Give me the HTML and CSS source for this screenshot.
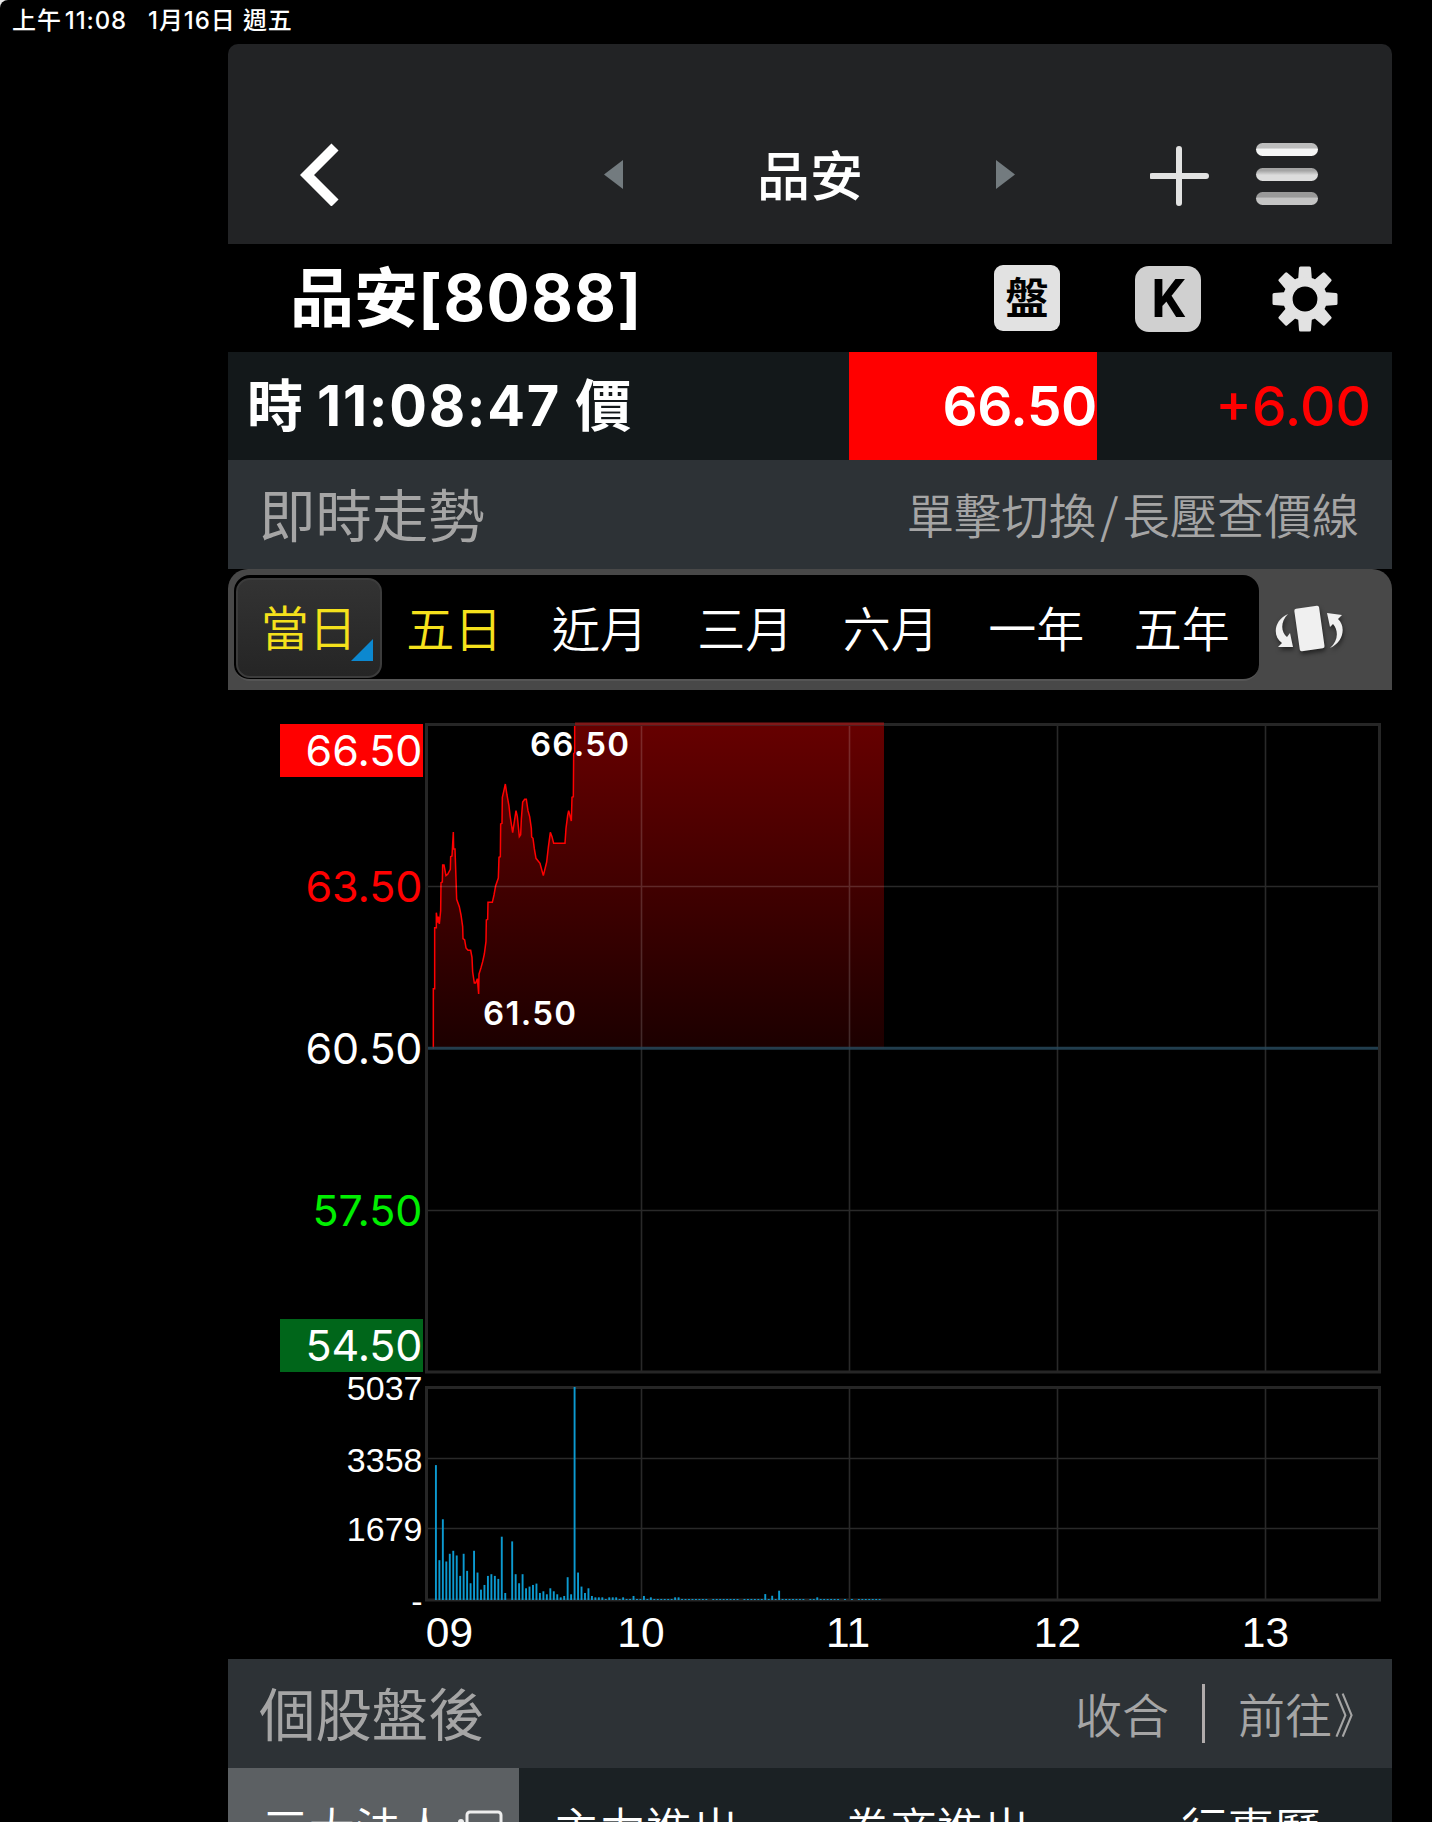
FILE: index.html
```html
<!DOCTYPE html>
<html lang="zh-Hant">
<head>
    <meta charset="UTF-8">
    <meta name="viewport" content="width=device-width, initial-scale=1.0">
    <title>品安[8088]</title>
    <link rel="stylesheet" href="styles.css">
</head>
<body>
    <div class="screen">
        <div class="status-bar">
            <span class="status-time">上午<b>11:08</b></span>
            <span class="status-date">1月16日 週五</span>
        </div>

        <div class="app">
            <header class="nav">
                <svg class="nav-back" viewBox="0 0 40 64"><path d="M35 5 7 33l28 28" fill="none" stroke="#fff" stroke-width="10"/></svg>
                <div class="nav-title">
                    <svg class="nav-arrow" viewBox="0 0 20 30"><path d="M19 1v29L0 15.500z" fill="#737b7f"/></svg>
                    <h1>品安</h1>
                    <svg class="nav-arrow" viewBox="0 0 20 30"><path d="M0 1v29l19-14.500z" fill="#737b7f"/></svg>
                </div>
                <svg class="nav-add" viewBox="0 0 60 60"><path d="M29 3v54M2 30h54" stroke="#e2e2e2" stroke-width="6" stroke-linecap="round"/></svg>
                <div class="nav-menu">
                    <i class="bar bar-1"></i>
                    <i class="bar bar-2"></i>
                    <i class="bar bar-3"></i>
                </div>
            </header>

            <div class="stock">
                <h2>品安<span>[8088]</span></h2>
                <span class="key">盤</span>
                <span class="key key-k">K</span>
                <svg class="gear" viewBox="-33 -33 66 66">
                    <g fill="#e2e2e2">
                        <path id="tooth" d="M-7-18-6-31q0-1.500 1.500-1.500h9q1.500 0 1.500 1.500l1 13z"/>
                        <use href="#tooth" transform="rotate(45)"/>
                        <use href="#tooth" transform="rotate(90)"/>
                        <use href="#tooth" transform="rotate(135)"/>
                        <use href="#tooth" transform="rotate(180)"/>
                        <use href="#tooth" transform="rotate(225)"/>
                        <use href="#tooth" transform="rotate(270)"/>
                        <use href="#tooth" transform="rotate(315)"/>
                    </g>
                    <circle r="17" fill="none" stroke="#e2e2e2" stroke-width="10"/>
                    <circle r="12.400" fill="#000"/>
                </svg>
            </div>

            <div class="quote">
                <div class="quote-time">時 <span>11:08:47</span> 價</div>
                <div class="quote-price">66.50</div>
                <div class="quote-change">+6.00</div>
            </div>

            <div class="section">
                <h3>即時走勢</h3>
                <span class="hint">單擊切換<em>/</em>長壓查價線</span>
            </div>

            <div class="range">
                <div class="range-tabs">
                    <span class="tab tab-active">當日</span>
                    <span class="tab tab-yellow">五日</span>
                    <span class="tab">近月</span>
                    <span class="tab">三月</span>
                    <span class="tab">六月</span>
                    <span class="tab">一年</span>
                    <span class="tab">五年</span>
                </div>
                <svg class="rotate" viewBox="0 0 70 60">
                    <g fill="#f0f0f0">
                        <rect x="22" y="8" width="25" height="43" rx="2" transform="rotate(-8 34.500 30)"/>
                        <path d="M13 15C-1 21-3 37 7 44l-4 4h15l-3-14-3 4C6 33 5 23 13 15z"/>
                        <path d="M55 49C69 43 71 27 63 20l4-4-15-2 3 14 3-3C64 32 63 42 55 49z"/>
                    </g>
                </svg>
            </div>

            <svg class="chart" viewBox="0 0 1164 969" width="1164" height="969">
                <defs>
                    <linearGradient id="area" x1="0" y1="0" x2="0" y2="1">
                        <stop offset="0" stop-color="#660000"/>
                        <stop offset="1" stop-color="#1c0000"/>
                    </linearGradient>
                </defs>

                <!-- price axis -->
                <rect x="52" y="34" width="143" height="53" fill="#f00"/>
                <rect x="52" y="629" width="143" height="53" fill="#00661a"/>
                <g class="price-axis">
                    <text x="194.500" y="76" textLength="117">66.50</text>
                    <text x="194.500" y="212" textLength="117" class="up">63.50</text>
                    <text x="194.500" y="374" textLength="117">60.50</text>
                    <text x="194.500" y="536" textLength="110" class="down">57.50</text>
                    <text x="194.500" y="671" textLength="117">54.50</text>
                </g>

                <!-- price area: coordinates are thirds of a pixel -->
                <g transform="translate(42 10) scale(.33333)">
                    <path id="fill" fill="url(#area)"/>
                    <path id="line" fill="none" stroke="#f00" stroke-width="4.500"/>
                </g>

                <g class="grid">
                    <path d="M413.500 35v647M621.500 35v647M829.500 35v647M1037.500 35v647M199 196.500h953M199 520.500h953"/>
                    <path d="M413.500 699v210M621.500 699v210M829.500 699v210M1037.500 699v210M199 768.500h953M199 838.500h953"/>
                </g>
                <path d="M199 358.300h953" stroke="#27485a" stroke-opacity=".85" stroke-width="3"/>
                <g class="frame">
                    <rect x="198.500" y="34.500" width="953" height="647.500"/>
                    <rect x="198.500" y="697.500" width="953" height="212.500"/>
                </g>
                <path d="M347 34h309" stroke="#801818" stroke-width="3"/>

                <g class="peak">
                    <text x="302" y="66" textLength="99">66.50</text>
                    <text x="255" y="335" textLength="93">61.50</text>
                </g>

                <!-- volume -->
                <g id="volume" fill="#0c9ad0"></g>
                <g class="volume-axis">
                    <text x="194.500" y="710">5037</text>
                    <text x="194.500" y="782">3358</text>
                    <text x="194.500" y="851">1679</text>
                    <text x="194.500" y="923">-</text>
                </g>
                <g class="hours">
                    <text x="221.500" y="957">09</text>
                    <text x="413" y="957">10</text>
                    <text x="620" y="957">11</text>
                    <text x="829.500" y="957">12</text>
                    <text x="1037.500" y="957">13</text>
                </g>
            </svg>

            <div class="section">
                <h3>個股盤後</h3>
                <div class="actions">
                    <span>收合</span>
                    <i class="divider"></i>
                    <span class="goto">前往<em>》</em></span>
                </div>
            </div>

            <div class="report-tabs">
                <span class="report report-active">三大法人
                    <svg viewBox="0 0 46 46"><rect x="9" y="3" width="34" height="38" rx="3" fill="none" stroke="#eee" stroke-width="3"/><circle cx="3" cy="13" r="3" fill="#eee"/></svg>
                </span>
                <span class="report">主力進出</span>
                <span class="report">券商進出</span>
                <span class="report report-last">行事曆</span>
            </div>
        </div>
    </div>

    <script>
        const prices = '490,1046 490,866 494,866 494,683 499,683 499,638 503,668 505,650 508,672 512,632 513,548 517,546 518,495 522,495 528,527 533,523 541,508 542,470 546,468 550,396 551,447 555,447 558,536 560,598 568,620 573,645 578,680 579,716 584,720 588,744 594,751 602,751 606,772 608,816 613,849 617,849 622,836 626,882 627,822 633,803 638,785 643,762 648,724 649,660 653,658 654,607 667,607 672,585 677,557 685,534 687,472 691,470 692,372 696,370 697,292 701,275 706,252 711,285 717,318 720,346 728,398 733,365 738,332 742,350 748,410 752,404 754,358 758,306 764,298 769,298 774,332 779,350 784,385 785,411 789,415 793,446 798,475 810,490 820,527 830,486 835,442 841,397 846,410 851,430 885,430 888,385 893,346 896,332 904,363 906,292 910,290 911,160 914,158 914,73';
        document.getElementById('line').setAttribute('d', 'M' + prices);
        document.getElementById('fill').setAttribute('d', 'M' + prices + ' 1842,73 1842,1046z');

        // volume per minute from 09:01
        const volumes = [
            3190, 942, 1909, 911, 1093, 1164, 1053, 570, 1093, 689, 396, 1164, 649, 245, 356, 570, 610, 570, 499, 1497,
            166, 0, 1386, 610, 396, 610, 277, 317, 356, 388, 166, 206, 135, 277, 206, 135, 63, 95, 539, 135,
            5037, 649, 317, 166, 277, 95, 63, 63, 63, 24, 63, 63, 63, 24, 63, 24, 24, 95, 24, 24,
            95, 24, 63, 24, 24, 24, 24, 24, 24, 63, 63, 24, 24, 24, 24, 24, 24, 24, 24, 0,
            24, 24, 24, 24, 24, 24, 24, 24, 0, 24, 24, 24, 24, 24, 24, 140, 24, 100, 24, 220,
            24, 24, 24, 24, 24, 24, 24, 0, 24, 24, 63, 24, 24, 24, 24, 24, 24, 0, 24, 0,
            24, 0, 24, 24, 24, 24, 24, 24, 24
        ];
        const group = document.getElementById('volume');
        volumes.forEach((v, i) => {
            const h = v / 5037 * 213;
            const bar = document.createElementNS('http://www.w3.org/2000/svg', 'rect');
            bar.setAttribute('x', (203.5 + (i + 1) * 208 / 60).toFixed(2));
            bar.setAttribute('y', (910 - h).toFixed(2));
            bar.setAttribute('width', 1.9);
            bar.setAttribute('height', h.toFixed(2));
            group.appendChild(bar);
        });
    </script>
</body>
</html>
```
FILE: styles.css
```css
* {
    box-sizing: border-box;
}

body {
    margin: 0;
    background: #e8e8e8;
    color: #fff;
    font-family: Inter, "Noto Sans CJK TC", sans-serif;
}

h1, h2, h3 {
    margin: 0;
}

.screen {
    height: 1822px;
    background: #000;
    border-top-left-radius: 8px;
    overflow: hidden;
}

.status-bar {
    height: 44px;
    padding-left: 12px;
    display: flex;
    align-items: center;
    gap: 21px;
    font-size: 24px;
    font-weight: 500;
    line-height: 40px;
    padding-bottom: 3px;
    letter-spacing: 0.9px;
    white-space: nowrap;
}

.status-time b {
    font-weight: 500;
    margin-left: 3px;
}

.app {
    width: 1164px;
    margin-left: 228px;
}

.nav {
    height: 200px;
    padding: 60px 74px 0 72px;
    background: #222325;
    border-radius: 10px 10px 0 0;
    display: flex;
    align-items: center;
}

.nav-back {
    width: 40px;
    height: 64px;
}

.nav-title {
    width: 412px;
    margin-left: 264px;
    display: flex;
    align-items: center;
    justify-content: space-between;
}

.nav-title h1 {
    margin-top: 5px;
    font-size: 53px;
    font-weight: 500;
    line-height: 60px;
}

.nav-arrow {
    width: 20px;
    height: 30px;
}

.nav-add {
    width: 60px;
    height: 60px;
    margin-left: 134px;
    margin-top: 4px;
}

.nav-menu {
    width: 62px;
    height: 62px;
    margin-left: auto;
    display: flex;
    flex-direction: column;
    justify-content: space-between;
}

.bar {
    height: 13px;
    border-radius: 7px;
}

.bar-1 {
    background: linear-gradient(#bdbdbd 40%, #f5f5f5 45%);
}

.bar-2 {
    background: linear-gradient(#a4a4a4 20%, #dcdcdc 55%);
}

.bar-3 {
    background: linear-gradient(#999 38%, #c4c4c4 48%);
}

.stock {
    height: 108px;
    padding: 0 54px 0 62px;
    display: flex;
    align-items: center;
}

.stock h2 {
    flex: 1;
    font-size: 64px;
    font-weight: 600;
    line-height: 100px;
    white-space: nowrap;
}

.stock h2 span {
    font-weight: 650;
    letter-spacing: 1.4px;
}

.key {
    width: 66px;
    height: 66px;
    margin-right: 75px;
    background: #e2e2e2;
    border-radius: 9px;
    color: #000;
    font-size: 43px;
    font-weight: 600;
    line-height: 67px;
    text-align: center;
}

.key-k {
    margin-right: 71px;
    margin-top: 2px;
    background: #d0d0d0;
    border-radius: 14px;
    font-family: Roboto, sans-serif;
    font-size: 53px;
    font-weight: 700;
}

.gear {
    width: 66px;
    height: 66px;
    margin-top: 2px;
}

.quote {
    height: 108px;
    background: #13181a;
    display: flex;
    font-size: 56px;
    font-weight: 600;
    line-height: 109px;
    white-space: nowrap;
}

.quote-time {
    width: 621px;
    padding-left: 19px;
}

.quote-time span {
    font-weight: 650;
    letter-spacing: 1.7px;
}

.quote-price {
    width: 248px;
    background: #f00;
    font-size: 55px;
    letter-spacing: -0.4px;
    text-align: right;
}

.quote-change {
    flex: 1;
    padding-right: 21px;
    color: #f00;
    font-size: 55px;
    font-weight: 550;
    text-align: right;
}

.section {
    height: 109px;
    padding: 0 33px 0 31px;
    background: #2d3236;
    color: #a5a5a5;
    display: flex;
    align-items: center;
    justify-content: space-between;
    font-family: "Noto Sans CJK TC", sans-serif;
    font-weight: 350;
}

.section h3 {
    margin-top: -4px;
    font-size: 56.4px;
    font-weight: 400;
}

.hint {
    margin-top: -2px;
    font-size: 47.3px;
}

.hint em {
    font-style: normal;
    margin: 0 4px;
}

.actions {
    display: flex;
    align-items: center;
    font-size: 47px;
}

.actions span {
    margin-top: -2px;
}

.divider {
    width: 3px;
    height: 59px;
    margin: 0 33px;
    background: #b0abab;
}

.goto {
    width: 121px;
    white-space: nowrap;
}

.goto em {
    display: inline-block;
    margin-left: 2px;
    font-style: normal;
    transform: scaleX(0.85);
    transform-origin: left;
}

.range {
    height: 121px;
    padding: 6px 0 9px 6px;
    background: #484848;
    border-radius: 20px 20px 0 0;
    display: flex;
}

.range-tabs {
    width: 1025px;
    padding: 3px 0 0 2px;
    background: #000;
    border-bottom: 2px solid #555;
    border-radius: 16px;
    display: flex;
}

.tab {
    width: 145.5px;
    height: 100px;
    font-family: "Noto Sans CJK TC", sans-serif;
    font-size: 48px;
    font-weight: 350;
    line-height: 97px;
    text-align: center;
}

.tab-active {
    position: relative;
    background: linear-gradient(#333, #252525);
    border: 2px solid #3c3c3c;
    border-radius: 14px;
    color: #f5e11c;
    line-height: 91px;
}

.tab-active::after {
    content: "";
    position: absolute;
    right: 7px;
    bottom: 15px;
    border-left: 22px solid transparent;
    border-bottom: 22px solid #0c88d0;
}

.tab-yellow {
    color: #f5e11c;
}

.rotate {
    width: 70px;
    height: 60px;
    margin: 24px 0 0 16px;
    filter: drop-shadow(1px 3px 2px rgba(0, 0, 0, 0.5));
}

.chart {
    display: block;
}

.chart text {
    fill: #fff;
}

.chart .up {
    fill: #f00;
}

.chart .down {
    fill: #0e0;
}

.price-axis {
    font-size: 43px;
    text-anchor: end;
}

.peak {
    font-size: 33px;
    font-weight: 600;
}

.volume-axis {
    font-family: "Liberation Sans", sans-serif;
    font-size: 34px;
    text-anchor: end;
}

.hours {
    font-family: "Liberation Sans", sans-serif;
    font-size: 42.5px;
    text-anchor: middle;
}

.grid {
    stroke: #fff;
    stroke-opacity: 0.16;
    stroke-width: 1.6;
}

.frame {
    fill: none;
    stroke: #262626;
    stroke-width: 3;
}

.report-tabs {
    height: 110px;
    background: #1b2124;
    display: flex;
    font-family: "Noto Sans CJK TC", sans-serif;
    font-size: 46.5px;
    font-weight: 350;
    line-height: 118px;
    white-space: nowrap;
}

.report {
    width: 291px;
    padding-left: 34px;
}

.report-active {
    background: #5c6063;
    display: flex;
}

.report-active svg {
    width: 46px;
    height: 46px;
    margin: 41px 0 0 10px;
}

.report-last {
    padding-left: 80px;
}
```
